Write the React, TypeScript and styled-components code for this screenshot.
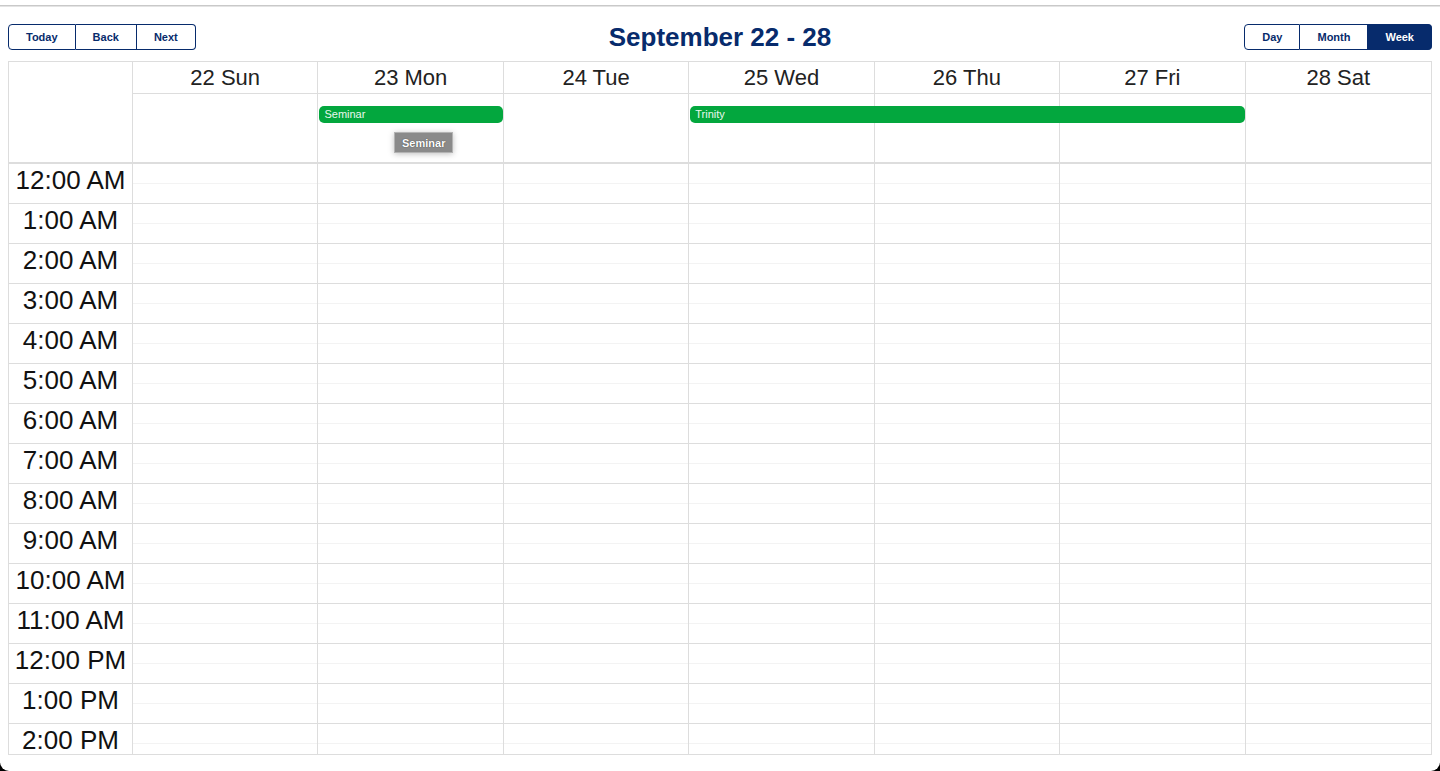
import React from "react";
import styled, { createGlobalStyle } from "styled-components";

const NAVY = "#072b6c";
const LINE = "#dddddd";
const GREEN = "#03a73e";

const GlobalStyle = createGlobalStyle`
  html, body { margin: 0; padding: 0; background: #000; }
  * { box-sizing: border-box; }
  body { font-family: "Liberation Sans", Arial, Helvetica, sans-serif; }
`;

const Frame = styled.div`
  width: 1440px;
  height: 771px;
  background: #fff;
  border-radius: 0 0 9px 9px;
  overflow: hidden;
  display: flex;
  flex-direction: column;
`;

const TopRule = styled.div`
  margin-top: 5px;
  height: 2px;
  border-top: 1px solid #c9c9c9;
  background: #e4e4e4;
`;

const Toolbar = styled.div`
  margin: 17px 8px 0;
  height: 26px;
  display: grid;
  grid-template-columns: 1fr auto 1fr;
  grid-template-rows: 26px;
  align-items: center;
`;

const ButtonGroup = styled.div<{ $align: "start" | "end" }>`
  display: flex;
  justify-self: ${(p) => p.$align};
`;

const Btn = styled.button<{ $active?: boolean }>`
  height: 26px;
  padding: 0 17px;
  margin: 0;
  font-family: "Liberation Sans", Arial, sans-serif;
  font-size: 11px;
  font-weight: 700;
  color: ${(p) => (p.$active ? "#fff" : NAVY)};
  background: ${(p) => (p.$active ? NAVY : "#fff")};
  border: 1px solid ${NAVY};
  border-radius: 0;
  cursor: pointer;
  & + & { border-left: none; }
  &:first-child { border-radius: 4px 0 0 4px; }
  &:last-child { border-radius: 0 4px 4px 0; }
`;

const Title = styled.h1`
  margin: 0;
  font-family: "Liberation Sans", Arial, sans-serif;
  font-size: 26px;
  line-height: 26px;
  font-weight: 700;
  color: ${NAVY};
`;

const Calendar = styled.div`
  margin: 11px 8px 0;
  height: 694px;
  border: 1px solid ${LINE};
  display: flex;
  flex-direction: column;
`;

const Header = styled.div`
  display: grid;
  grid-template-columns: 124px 1fr;
  border-bottom: 2px solid ${LINE};
  flex: none;
`;

const GutterCell = styled.div`
  border-right: 1px solid ${LINE};
`;

const DaysHeader = styled.div`
  display: flex;
  flex-direction: column;
`;

const DateRow = styled.div`
  display: grid;
  grid-template-columns: repeat(7, 1fr);
  height: 32px;
  border-bottom: 1px solid ${LINE};
`;

const DateCell = styled.div`
  display: flex;
  align-items: center;
  justify-content: center;
  font-size: 22px;
  color: #222;
  border-right: 1px solid ${LINE};
  &:last-child { border-right: none; }
`;

const AllDayGrid = styled.div`
  position: relative;
  display: grid;
  grid-template-columns: repeat(7, 1fr);
  grid-template-rows: 12px 17px 1fr;
  height: 68px;
`;

const DayBg = styled.div<{ $col: number; $last?: boolean }>`
  grid-row: 1 / -1;
  grid-column: ${(p) => p.$col};
  border-right: ${(p) => (p.$last ? "none" : `1px solid ${LINE}`)};
`;

const EventBar = styled.div<{ $start: number; $span: number }>`
  grid-row: 2;
  grid-column: ${(p) => p.$start} / span ${(p) => p.$span};
  margin: 0 1px 0 1px;
  background: ${GREEN};
  border-radius: 5px;
  color: #e9f7ee;
  font-size: 11px;
  line-height: 17px;
  padding-left: 5px;
  white-space: nowrap;
  overflow: hidden;
`;

const Tooltip = styled.div`
  position: absolute;
  left: 261px;
  top: 38px;
  height: 21px;
  padding: 0 7px;
  display: flex;
  align-items: center;
  background: #8a8a8a;
  border: 1px solid #b3b3b3;
  box-shadow: 0 1px 6px rgba(0, 0, 0, 0.25);
  color: #fff;
  font-size: 11px;
  font-weight: 700;
  text-shadow: 0 0 1px rgba(0, 0, 0, 0.7);
`;

const Body = styled.div`
  flex: 1;
  overflow: hidden;
  display: grid;
  grid-template-columns: 124px repeat(7, 1fr);
  align-items: start;
`;

const TimeGutter = styled.div`
  border-right: 1px solid ${LINE};
`;

const TimeLabel = styled.div`
  height: 40px;
  border-bottom: 1px solid ${LINE};
  display: flex;
  align-items: center;
  justify-content: center;
  padding-bottom: 6px;
  font-size: 26px;
  color: #111;
  white-space: nowrap;
`;

const DayColumn = styled.div`
  border-right: 1px solid ${LINE};
  &:last-child { border-right: none; }
`;

const HalfSlot = styled.div<{ $hour?: boolean }>`
  height: 20px;
  border-bottom: 1px solid ${(p) => (p.$hour ? LINE : "#f3f3f3")};
`;

const days = ["22 Sun", "23 Mon", "24 Tue", "25 Wed", "26 Thu", "27 Fri", "28 Sat"];
const hours = [
  "12:00 AM", "1:00 AM", "2:00 AM", "3:00 AM", "4:00 AM", "5:00 AM", "6:00 AM",
  "7:00 AM", "8:00 AM", "9:00 AM", "10:00 AM", "11:00 AM", "12:00 PM", "1:00 PM",
  "2:00 PM",
];

export default function App() {
  return (
    <>
      <GlobalStyle />
      <Frame>
        <TopRule />
        <Toolbar>
          <ButtonGroup $align="start">
            <Btn>Today</Btn>
            <Btn>Back</Btn>
            <Btn>Next</Btn>
          </ButtonGroup>
          <Title>September 22 - 28</Title>
          <ButtonGroup $align="end">
            <Btn>Day</Btn>
            <Btn>Month</Btn>
            <Btn $active>Week</Btn>
          </ButtonGroup>
        </Toolbar>
        <Calendar>
          <Header>
            <GutterCell />
            <DaysHeader>
              <DateRow>
                {days.map((d) => (
                  <DateCell key={d}>{d}</DateCell>
                ))}
              </DateRow>
              <AllDayGrid>
                {days.map((d, i) => (
                  <DayBg key={d} $col={i + 1} $last={i === 6} />
                ))}
                <EventBar $start={2} $span={1}>Seminar</EventBar>
                <EventBar $start={4} $span={3}>Trinity</EventBar>
                <Tooltip>Seminar</Tooltip>
              </AllDayGrid>
            </DaysHeader>
          </Header>
          <Body>
            <TimeGutter>
              {hours.map((h) => (
                <TimeLabel key={h}>{h}</TimeLabel>
              ))}
            </TimeGutter>
            {days.map((d) => (
              <DayColumn key={d}>
                {hours.map((h) => (
                  <React.Fragment key={h}>
                    <HalfSlot />
                    <HalfSlot $hour />
                  </React.Fragment>
                ))}
              </DayColumn>
            ))}
          </Body>
        </Calendar>
      </Frame>
    </>
  );
}
